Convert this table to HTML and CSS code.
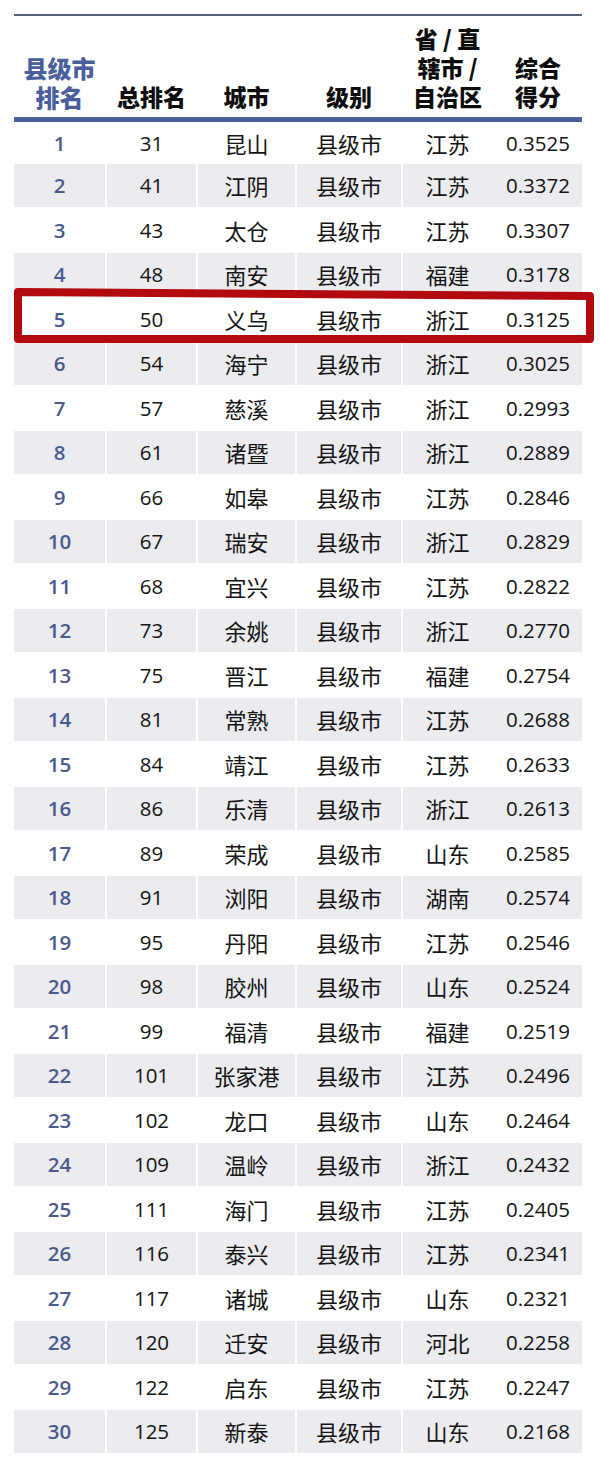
FILE: index.html
```html
<!DOCTYPE html>
<html lang="zh">
<head>
<meta charset="utf-8">
<link rel="stylesheet" href="styles.css">
</head>
<body>
<div class="wrap">
  <div class="topline"></div>
  <div class="thead">
    <div class="h h1">县级市<br>排名</div>
    <div class="h">总排名</div>
    <div class="h">城市</div>
    <div class="h">级别</div>
    <div class="h">省 / 直<br>辖市 /<br>自治区</div>
    <div class="h">综合<br>得分</div>
  </div>
  <div class="tbody" id="tbody">
    <div class="row first"><div class="c rk">1</div><div class="c n">31</div><div class="c">昆山</div><div class="c">县级市</div><div class="c">江苏</div><div class="c n">0.3525</div></div>
    <div class="row alt"><div class="c rk">2</div><div class="c n">41</div><div class="c">江阴</div><div class="c">县级市</div><div class="c">江苏</div><div class="c n">0.3372</div></div>
    <div class="row"><div class="c rk">3</div><div class="c n">43</div><div class="c">太仓</div><div class="c">县级市</div><div class="c">江苏</div><div class="c n">0.3307</div></div>
    <div class="row alt"><div class="c rk">4</div><div class="c n">48</div><div class="c">南安</div><div class="c">县级市</div><div class="c">福建</div><div class="c n">0.3178</div></div>
    <div class="row"><div class="c rk">5</div><div class="c n">50</div><div class="c">义乌</div><div class="c">县级市</div><div class="c">浙江</div><div class="c n">0.3125</div></div>
    <div class="row alt"><div class="c rk">6</div><div class="c n">54</div><div class="c">海宁</div><div class="c">县级市</div><div class="c">浙江</div><div class="c n">0.3025</div></div>
    <div class="row"><div class="c rk">7</div><div class="c n">57</div><div class="c">慈溪</div><div class="c">县级市</div><div class="c">浙江</div><div class="c n">0.2993</div></div>
    <div class="row alt"><div class="c rk">8</div><div class="c n">61</div><div class="c">诸暨</div><div class="c">县级市</div><div class="c">浙江</div><div class="c n">0.2889</div></div>
    <div class="row"><div class="c rk">9</div><div class="c n">66</div><div class="c">如皋</div><div class="c">县级市</div><div class="c">江苏</div><div class="c n">0.2846</div></div>
    <div class="row alt"><div class="c rk">10</div><div class="c n">67</div><div class="c">瑞安</div><div class="c">县级市</div><div class="c">浙江</div><div class="c n">0.2829</div></div>
    <div class="row"><div class="c rk">11</div><div class="c n">68</div><div class="c">宜兴</div><div class="c">县级市</div><div class="c">江苏</div><div class="c n">0.2822</div></div>
    <div class="row alt"><div class="c rk">12</div><div class="c n">73</div><div class="c">余姚</div><div class="c">县级市</div><div class="c">浙江</div><div class="c n">0.2770</div></div>
    <div class="row"><div class="c rk">13</div><div class="c n">75</div><div class="c">晋江</div><div class="c">县级市</div><div class="c">福建</div><div class="c n">0.2754</div></div>
    <div class="row alt"><div class="c rk">14</div><div class="c n">81</div><div class="c">常熟</div><div class="c">县级市</div><div class="c">江苏</div><div class="c n">0.2688</div></div>
    <div class="row"><div class="c rk">15</div><div class="c n">84</div><div class="c">靖江</div><div class="c">县级市</div><div class="c">江苏</div><div class="c n">0.2633</div></div>
    <div class="row alt"><div class="c rk">16</div><div class="c n">86</div><div class="c">乐清</div><div class="c">县级市</div><div class="c">浙江</div><div class="c n">0.2613</div></div>
    <div class="row"><div class="c rk">17</div><div class="c n">89</div><div class="c">荣成</div><div class="c">县级市</div><div class="c">山东</div><div class="c n">0.2585</div></div>
    <div class="row alt"><div class="c rk">18</div><div class="c n">91</div><div class="c">浏阳</div><div class="c">县级市</div><div class="c">湖南</div><div class="c n">0.2574</div></div>
    <div class="row"><div class="c rk">19</div><div class="c n">95</div><div class="c">丹阳</div><div class="c">县级市</div><div class="c">江苏</div><div class="c n">0.2546</div></div>
    <div class="row alt"><div class="c rk">20</div><div class="c n">98</div><div class="c">胶州</div><div class="c">县级市</div><div class="c">山东</div><div class="c n">0.2524</div></div>
    <div class="row"><div class="c rk">21</div><div class="c n">99</div><div class="c">福清</div><div class="c">县级市</div><div class="c">福建</div><div class="c n">0.2519</div></div>
    <div class="row alt"><div class="c rk">22</div><div class="c n">101</div><div class="c">张家港</div><div class="c">县级市</div><div class="c">江苏</div><div class="c n">0.2496</div></div>
    <div class="row"><div class="c rk">23</div><div class="c n">102</div><div class="c">龙口</div><div class="c">县级市</div><div class="c">山东</div><div class="c n">0.2464</div></div>
    <div class="row alt"><div class="c rk">24</div><div class="c n">109</div><div class="c">温岭</div><div class="c">县级市</div><div class="c">浙江</div><div class="c n">0.2432</div></div>
    <div class="row"><div class="c rk">25</div><div class="c n">111</div><div class="c">海门</div><div class="c">县级市</div><div class="c">江苏</div><div class="c n">0.2405</div></div>
    <div class="row alt"><div class="c rk">26</div><div class="c n">116</div><div class="c">泰兴</div><div class="c">县级市</div><div class="c">江苏</div><div class="c n">0.2341</div></div>
    <div class="row"><div class="c rk">27</div><div class="c n">117</div><div class="c">诸城</div><div class="c">县级市</div><div class="c">山东</div><div class="c n">0.2321</div></div>
    <div class="row alt"><div class="c rk">28</div><div class="c n">120</div><div class="c">迁安</div><div class="c">县级市</div><div class="c">河北</div><div class="c n">0.2258</div></div>
    <div class="row"><div class="c rk">29</div><div class="c n">122</div><div class="c">启东</div><div class="c">县级市</div><div class="c">江苏</div><div class="c n">0.2247</div></div>
    <div class="row alt"><div class="c rk">30</div><div class="c n">125</div><div class="c">新泰</div><div class="c">县级市</div><div class="c">山东</div><div class="c n">0.2168</div></div>
  </div>
  <svg class="mark" width="600" height="70" viewBox="0 0 600 70">
    <path d="M18 12 L590 16 L590 59 L18 59 Z" fill="none" stroke="#b20a0e" stroke-width="8" stroke-linejoin="round"/>
  </svg>
</div>
</body>
</html>
```

FILE: styles.css
```css
* { box-sizing: border-box; }
html, body { margin: 0; padding: 0; background: #fff; }
body {
  font-family: "Open Sans", "Noto Sans CJK SC", sans-serif;
  color: #111;
}
.wrap {
  position: relative;
  width: 600px;
  height: 1469px;
  padding: 14px 18px 0 14px;
}
.topline {
  height: 2px;
  background: #58617a;
}
.thead, .row {
  display: grid;
  grid-template-columns: 91px 89px 97px 104px 89px 88px;
  column-gap: 2px;
}
.thead {
  height: 101px;
  align-items: end;
  padding-bottom: 6px;
  border-bottom: 5px solid #4a5e98;
  height: 106px;
}
.h {
  text-align: center;
  font-family: "Noto Sans CJK SC", sans-serif;
  font-weight: 900;
  font-size: 23px;
  line-height: 29px;
  color: #0d0d0d;
}
.h1 { color: #4b5e9c; font-size: 24px; }
.row {
  height: 44.5px;
}
.row.first { height: 41px; }
.c {
  display: flex;
  align-items: center;
  justify-content: center;
  font-family: "Noto Sans CJK SC", sans-serif;
  font-size: 22px;
  color: #141414;
}
.c.n, .c.rk {
  font-family: "Open Sans", sans-serif;
  font-size: 20.5px;
}
.c.rk {
  color: #4b5a8e;
  font-weight: 600;
}
.row.alt .c {
  background: #ebebf0;
  margin: 0.5px 0;
}
.row.alt .c:last-child {
  box-shadow: -2px 0 0 #ebebf0;
}
.mark {
  position: absolute;
  left: 0;
  top: 280px;
  pointer-events: none;
}
```
